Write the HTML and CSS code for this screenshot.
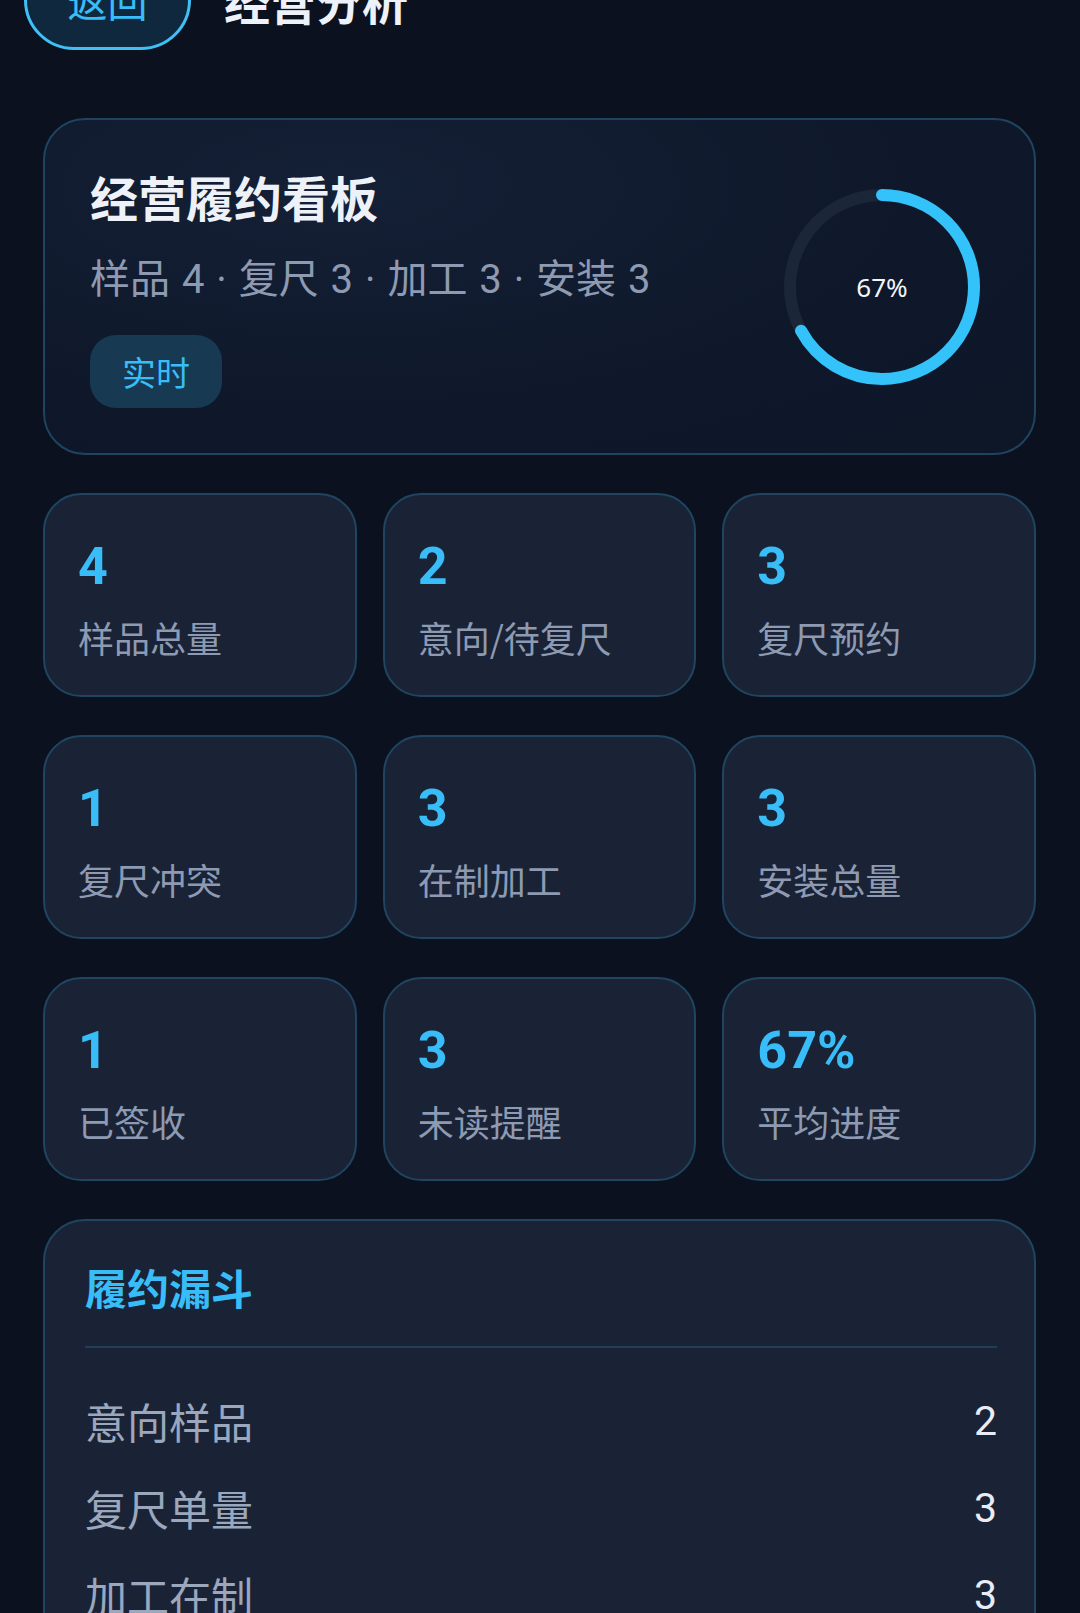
FILE: index.html
```html
<!DOCTYPE html>
<html lang="zh-CN">
<head>
<meta charset="utf-8">
<title>经营分析</title>
<link rel="stylesheet" href="styles.css">
</head>
<body>
<div class="page">
  <header class="topbar">
    <button class="back-btn">返回</button>
    <h1 class="page-title">经营分析</h1>
  </header>

  <section class="hero">
    <div class="hero-info">
      <h2 class="hero-title">经营履约看板</h2>
      <p class="hero-sub">样品 4 · 复尺 3 · 加工 3 · 安装 3</p>
      <span class="tag">实时</span>
    </div>
    <div class="ring">
      <svg class="ring-svg" width="196" height="196" viewBox="0 0 196 196">
        <circle class="ring-track" cx="98" cy="98" r="92"></circle>
        <circle class="ring-bar" cx="98" cy="98" r="92" stroke-dasharray="387.3 578.1" transform="rotate(-90 98 98)"></circle>
      </svg>
      <span class="ring-label">67%</span>
    </div>
  </section>

  <section class="stats">
    <div class="stat"><div class="stat-num">4</div><div class="stat-label">样品总量</div></div>
    <div class="stat"><div class="stat-num">2</div><div class="stat-label">意向/待复尺</div></div>
    <div class="stat"><div class="stat-num">3</div><div class="stat-label">复尺预约</div></div>
    <div class="stat"><div class="stat-num">1</div><div class="stat-label">复尺冲突</div></div>
    <div class="stat"><div class="stat-num">3</div><div class="stat-label">在制加工</div></div>
    <div class="stat"><div class="stat-num">3</div><div class="stat-label">安装总量</div></div>
    <div class="stat"><div class="stat-num">1</div><div class="stat-label">已签收</div></div>
    <div class="stat"><div class="stat-num">3</div><div class="stat-label">未读提醒</div></div>
    <div class="stat"><div class="stat-num">67%</div><div class="stat-label">平均进度</div></div>
  </section>

  <section class="funnel">
    <h3 class="funnel-title">履约漏斗</h3>
    <div class="funnel-rows">
      <div class="funnel-row"><span class="f-label">意向样品</span><span class="f-value">2</span></div>
      <div class="funnel-row"><span class="f-label">复尺单量</span><span class="f-value">3</span></div>
      <div class="funnel-row"><span class="f-label">加工在制</span><span class="f-value">3</span></div>
      <div class="funnel-row"><span class="f-label">安装总量</span><span class="f-value">3</span></div>
    </div>
  </section>
</div>
</body>
</html>
```

FILE: styles.css
```css
* { box-sizing: border-box; }

html, body {
  margin: 0;
  padding: 0;
  background: #0b111e;
}

body {
  font-family: "Noto Sans CJK SC", "Noto Sans", sans-serif;
  color: #e8edf5;
  overflow: hidden;
}

.page {
  padding: 0 44px 60px 43px;
}

.topbar {
  display: flex;
  align-items: center;
  gap: 33px;
  margin-top: -50px;
  height: 100px;
}

.back-btn {
  width: 167px;
  height: 100px;
  border-radius: 50px;
  border: 3px solid #3fc1f5;
  background: #10283d;
  color: #38bdf8;
  font-family: inherit;
  font-size: 40px;
  line-height: 1;
  padding: 0;
  margin-left: -19px;
}

.page-title {
  margin: 0;
  font-size: 46px;
  font-weight: 700;
  color: #eef2f8;
  line-height: 1;
}

.hero {
  margin-top: 68px;
  height: 337px;
  border: 2px solid #1e4460;
  border-radius: 42px;
  background: radial-gradient(ellipse at 30% 20%, #142036 0%, #0f182a 60%, #0e1728 100%);
  display: flex;
  align-items: center;
  justify-content: space-between;
  padding: 0 54px 0 45px;
}

.hero-info {
  display: flex;
  flex-direction: column;
  align-items: flex-start;
}

.hero-title {
  margin: 0;
  font-size: 48px;
  line-height: 60px;
  font-weight: 700;
  color: #eef2f8;
}

.hero-sub {
  margin: 26px 0 0;
  font-family: Roboto, "Noto Sans CJK SC", sans-serif;
  font-size: 40px;
  line-height: 56px;
  color: #8e9ab2;
  white-space: nowrap;
  word-spacing: 2px;
}

.tag {
  margin-top: 27px;
  height: 73px;
  padding: 0 32px;
  border-radius: 26px;
  background: #173a52;
  color: #38bdf8;
  font-size: 34px;
  display: flex;
  align-items: center;
}

.ring {
  position: relative;
  width: 196px;
  height: 196px;
  display: flex;
  align-items: center;
  justify-content: center;
}

.ring-svg {
  position: absolute;
  left: 0;
  top: 0;
}

.ring-track {
  fill: none;
  stroke: #1b2639;
  stroke-width: 12;
}

.ring-bar {
  fill: none;
  stroke: #33c3fa;
  stroke-width: 12;
  stroke-linecap: round;
}

.ring-label {
  position: relative;
  font-family: "Noto Sans", "Open Sans", sans-serif;
  font-size: 26px;
  color: #f2f5fa;
}

.stats {
  margin-top: 38px;
  display: grid;
  grid-template-columns: repeat(3, 1fr);
  column-gap: 26px;
  row-gap: 38px;
}

.stat {
  height: 204px;
  border: 2px solid #1f4560;
  border-radius: 38px;
  background: #1a2336;
  padding: 42px 20px 0 33px;
}

.stat-num {
  font-family: Roboto, "Noto Sans CJK SC", sans-serif;
  font-size: 52px;
  line-height: 60px;
  font-weight: 700;
  color: #38bdf8;
}

.stat-label {
  margin-top: 15px;
  font-size: 36px;
  line-height: 50px;
  color: #8e9ab2;
  white-space: nowrap;
}

.funnel {
  margin-top: 38px;
  border: 2px solid #1f4560;
  border-radius: 42px;
  background: #1a2336;
  padding: 38px 37px 30px 40px;
}

.funnel-title {
  margin: 0;
  font-size: 42px;
  line-height: 56px;
  font-weight: 700;
  color: #38bdf8;
  padding-bottom: 31px;
  border-bottom: 2px solid #1e3f5a;
}

.funnel-rows {
  padding-top: 29px;
}

.funnel-row {
  height: 87px;
  display: flex;
  align-items: center;
  justify-content: space-between;
}

.f-label {
  font-size: 42px;
  color: #9aa7bd;
}

.f-value {
  font-family: Roboto, "Noto Sans CJK SC", sans-serif;
  font-size: 41px;
  font-weight: 400;
  color: #e8edf5;
}
```
